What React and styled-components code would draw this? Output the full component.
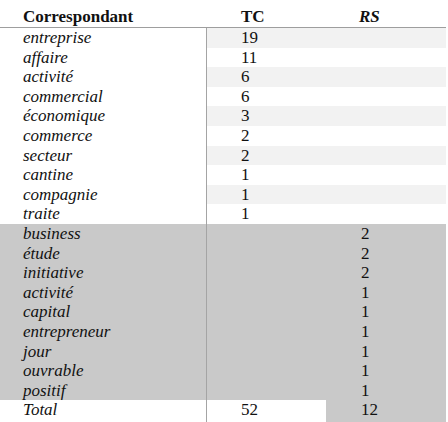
import React from 'react';
import styled, { createGlobalStyle } from 'styled-components';

const GlobalStyle = createGlobalStyle`
  html, body {
    margin: 0;
    padding: 0;
    background: #ffffff;
  }
`;

const Table = styled.div`
  width: 446px;
  display: flex;
  flex-direction: column;
  font-family: 'Liberation Serif', 'DejaVu Serif', serif;
  color: #111111;
`;

const Row = styled.div`
  display: grid;
  grid-template-columns: 207px 119px 120px;
  height: ${(p) => p.$height || '19.6px'};
  line-height: 19.6px;
  font-size: 17px;
  background: ${(p) => (p.$shaded ? '#c9c9c9' : 'transparent')};
`;

const HeaderRow = styled(Row)`
  height: 28px;
  padding-top: 7px;
  box-sizing: border-box;
  border-bottom: 1px solid #9e9e9e;
  font-weight: bold;
`;

const Label = styled.div`
  padding-left: 23px;
  font-style: ${(p) => (p.$upright ? 'normal' : 'italic')};
  border-right: ${(p) => (p.$noLine ? 'none' : '1px solid #a4a4a4')};
  white-space: nowrap;
`;

const Value = styled.div`
  padding-left: ${(p) => p.$pad || '34px'};
  font-style: ${(p) => (p.$italic ? 'italic' : 'normal')};
  background: ${(p) => p.$bg || 'transparent'};
`;

const tcRows = [
  ['entreprise', 19],
  ['affaire', 11],
  ['activité', 6],
  ['commercial', 6],
  ['économique', 3],
  ['commerce', 2],
  ['secteur', 2],
  ['cantine', 1],
  ['compagnie', 1],
  ['traite', 1],
];

const rsRows = [
  ['business', 2],
  ['étude', 2],
  ['initiative', 2],
  ['activité', 1],
  ['capital', 1],
  ['entrepreneur', 1],
  ['jour', 1],
  ['ouvrable', 1],
  ['positif', 1],
];

export default function App() {
  return (
    <>
      <GlobalStyle />
      <Table>
        <HeaderRow>
          <Label $upright $noLine>Correspondant</Label>
          <Value>TC</Value>
          <Value $italic $pad="33px">RS</Value>
        </HeaderRow>
        {tcRows.map(([word, n], i) => (
          <Row key={word}>
            <Label>{word}</Label>
            <Value $bg={i % 2 === 0 ? '#f2f2f2' : undefined}>{n}</Value>
            <Value $bg={i % 2 === 0 ? '#f2f2f2' : undefined} />
          </Row>
        ))}
        {rsRows.map(([word, n]) => (
          <Row key={'rs-' + word} $shaded>
            <Label>{word}</Label>
            <Value />
            <Value $pad="35px">{n}</Value>
          </Row>
        ))}
        <Row $height="21.6px">
          <Label>Total</Label>
          <Value>52</Value>
          <Value $pad="35px" $bg="#c9c9c9">12</Value>
        </Row>
      </Table>
    </>
  );
}
